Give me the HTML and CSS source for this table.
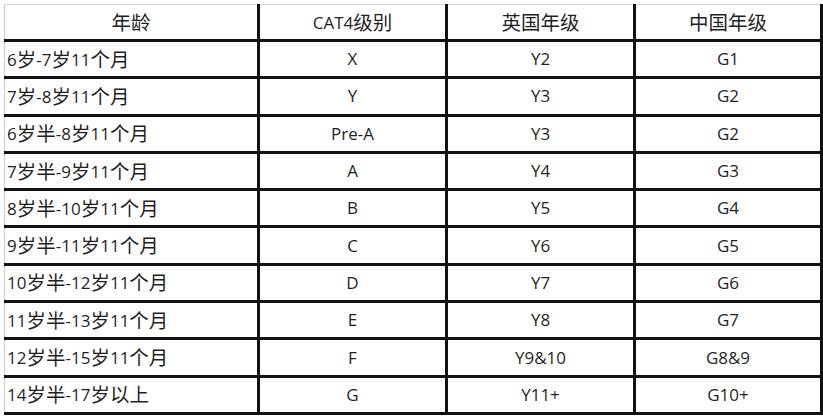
FILE: index.html
```html
<!DOCTYPE html>
<html lang="zh">
<head>
<meta charset="utf-8">
<link rel="stylesheet" href="styles.css">
</head>
<body>
<table class="grade-table">
  <colgroup>
    <col class="c1"><col class="c2"><col class="c3"><col class="c4">
  </colgroup>
  <thead>
    <tr><th><span class="zh">年龄</span></th><th>CAT4<span class="zh">级别</span></th><th><span class="zh">英国年级</span></th><th><span class="zh">中国年级</span></th></tr>
  </thead>
  <tbody>
    <tr><td>6<span class="zh">岁</span>-7<span class="zh">岁</span>11<span class="zh">个月</span></td><td>X</td><td>Y2</td><td>G1</td></tr>
    <tr><td>7<span class="zh">岁</span>-8<span class="zh">岁</span>11<span class="zh">个月</span></td><td>Y</td><td>Y3</td><td>G2</td></tr>
    <tr><td>6<span class="zh">岁半</span>-8<span class="zh">岁</span>11<span class="zh">个月</span></td><td>Pre-A</td><td>Y3</td><td>G2</td></tr>
    <tr><td>7<span class="zh">岁半</span>-9<span class="zh">岁</span>11<span class="zh">个月</span></td><td>A</td><td>Y4</td><td>G3</td></tr>
    <tr><td>8<span class="zh">岁半</span>-10<span class="zh">岁</span>11<span class="zh">个月</span></td><td>B</td><td>Y5</td><td>G4</td></tr>
    <tr><td>9<span class="zh">岁半</span>-11<span class="zh">岁</span>11<span class="zh">个月</span></td><td>C</td><td>Y6</td><td>G5</td></tr>
    <tr><td>10<span class="zh">岁半</span>-12<span class="zh">岁</span>11<span class="zh">个月</span></td><td>D</td><td>Y7</td><td>G6</td></tr>
    <tr><td>11<span class="zh">岁半</span>-13<span class="zh">岁</span>11<span class="zh">个月</span></td><td>E</td><td>Y8</td><td>G7</td></tr>
    <tr><td>12<span class="zh">岁半</span>-15<span class="zh">岁</span>11<span class="zh">个月</span></td><td>F</td><td>Y9&amp;10</td><td>G8&amp;9</td></tr>
    <tr><td>14<span class="zh">岁半</span>-17<span class="zh">岁以上</span></td><td>G</td><td>Y11+</td><td>G10+</td></tr>
  </tbody>
</table>
</body>
</html>
```

FILE: styles.css
```css
html, body {
  margin: 0;
  padding: 0;
  background: #ffffff;
}
body {
  padding: 4px 0 0 4px;
  font-family: "Open Sans", "Noto Sans CJK SC", sans-serif;
  color: #1f1f1f;
}
.grade-table {
  border-collapse: collapse;
  table-layout: fixed;
  width: 817px;
  font-size: 17px;
}
.c1 { width: 254px; }
.c2 { width: 188px; }
.c3 { width: 188px; }
.c4 { width: 187px; }
.grade-table th,
.grade-table td {
  border: 3px solid #111111;
  padding: 0;
  text-align: center;
  font-weight: normal;
  height: 34.3px;
  line-height: 22px;
  white-space: nowrap;
}
.grade-table th {
  border-top: 1px solid #d4d4d4;
  height: 34px;
}
.grade-table tr > :first-child {
  border-left: 1px solid #cccccc;
}
.grade-table td:first-child {
  text-align: left;
  padding-left: 2px;
}
.zh {
  font-family: "Noto Sans CJK SC", sans-serif;
  font-size: 19.5px;
  vertical-align: -1px;
}
```
